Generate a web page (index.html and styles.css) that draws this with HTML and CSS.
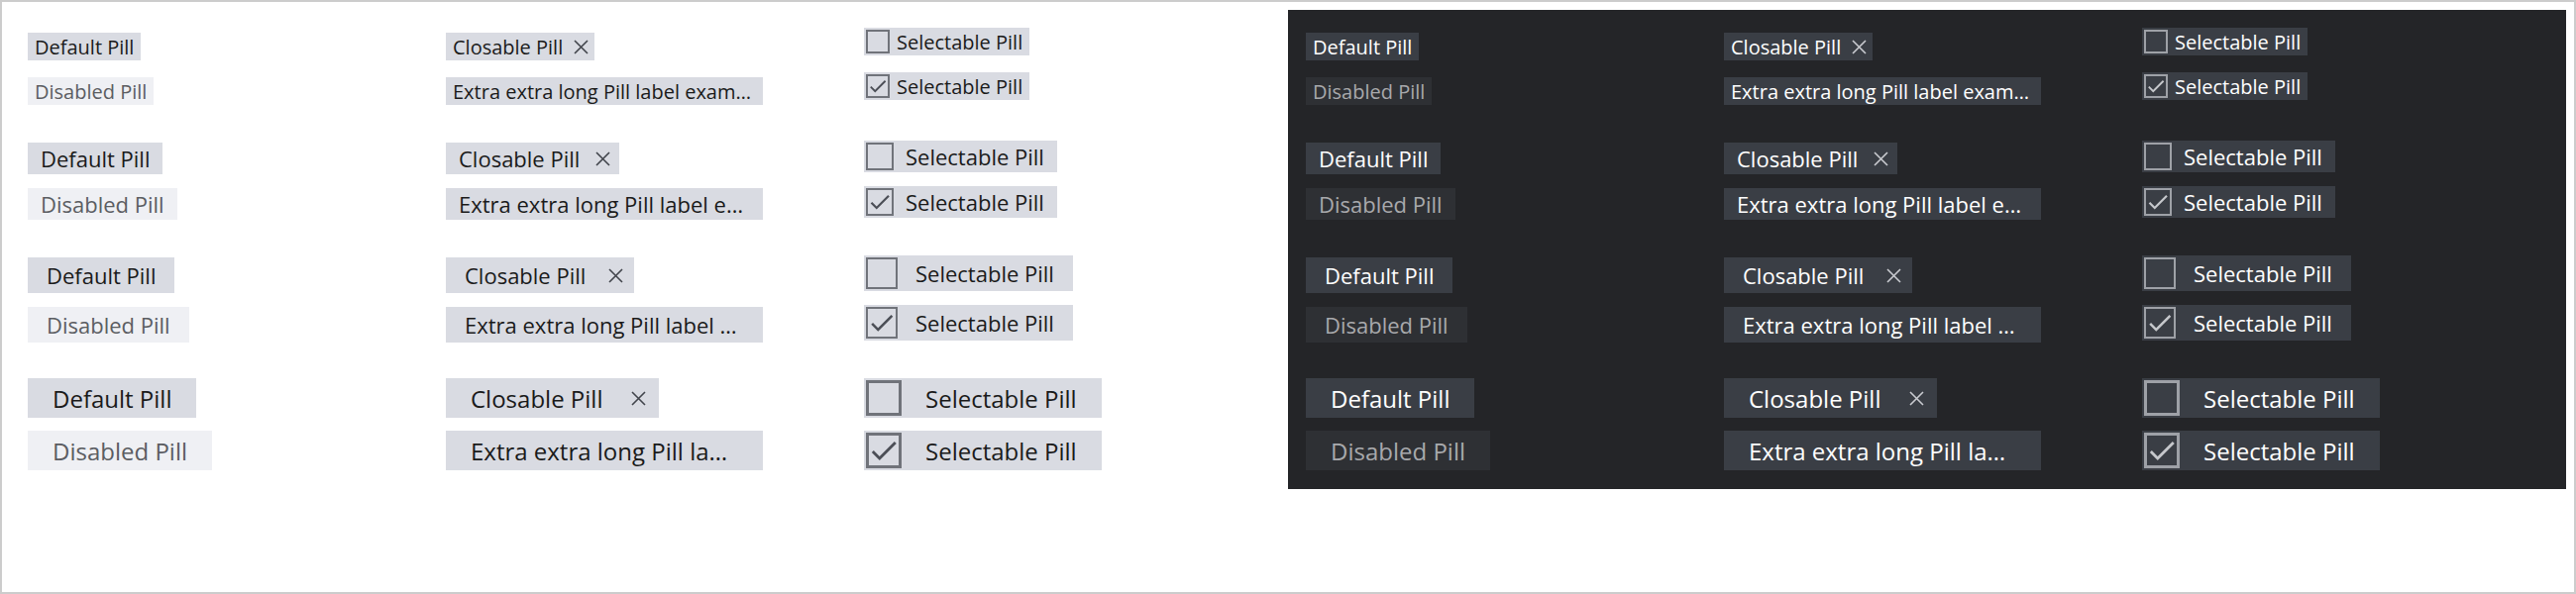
FILE: index.html
```html
<!DOCTYPE html>
<html lang="en">
<head>
<meta charset="utf-8">
<title>Pills</title>
<link rel="stylesheet" href="styles.css">
</head>
<body>
<div class="page">
  <section class="panel light">
    <div class="sec s1">
      <div class="cell shift">
        <span class="pill"><span class="lbl">Default Pill</span></span>
        <span class="pill disabled"><span class="lbl">Disabled Pill</span></span>
      </div>
      <div class="cell shift">
        <span class="pill close"><span class="lbl">Closable Pill</span><svg class="x" viewBox="0 0 15 15"><path d="M1 1L14 14M14 1L1 14"/></svg></span>
        <span class="pill long"><span class="lbl">Extra extra long Pill label example</span></span>
      </div>
      <div class="cell">
        <span class="pill sel"><span class="cb"></span><span class="lbl">Selectable Pill</span></span>
        <span class="pill sel"><span class="cb"><svg class="chk" viewBox="0 0 24 24"><path d="M9 16.17L4.83 12l-1.42 1.41L9 19 21 7l-1.41-1.41z"/></svg></span><span class="lbl">Selectable Pill</span></span>
      </div>
    </div>
    <div class="sec s2">
      <div class="cell shift">
        <span class="pill"><span class="lbl">Default Pill</span></span>
        <span class="pill disabled"><span class="lbl">Disabled Pill</span></span>
      </div>
      <div class="cell shift">
        <span class="pill close"><span class="lbl">Closable Pill</span><svg class="x" viewBox="0 0 15 15"><path d="M1 1L14 14M14 1L1 14"/></svg></span>
        <span class="pill long"><span class="lbl">Extra extra long Pill label example</span></span>
      </div>
      <div class="cell">
        <span class="pill sel"><span class="cb"></span><span class="lbl">Selectable Pill</span></span>
        <span class="pill sel"><span class="cb"><svg class="chk" viewBox="0 0 24 24"><path d="M9 16.17L4.83 12l-1.42 1.41L9 19 21 7l-1.41-1.41z"/></svg></span><span class="lbl">Selectable Pill</span></span>
      </div>
    </div>
    <div class="sec s3">
      <div class="cell shift">
        <span class="pill"><span class="lbl">Default Pill</span></span>
        <span class="pill disabled"><span class="lbl">Disabled Pill</span></span>
      </div>
      <div class="cell shift">
        <span class="pill close"><span class="lbl">Closable Pill</span><svg class="x" viewBox="0 0 15 15"><path d="M1 1L14 14M14 1L1 14"/></svg></span>
        <span class="pill long"><span class="lbl">Extra extra long Pill label example</span></span>
      </div>
      <div class="cell">
        <span class="pill sel"><span class="cb"></span><span class="lbl">Selectable Pill</span></span>
        <span class="pill sel"><span class="cb"><svg class="chk" viewBox="0 0 24 24"><path d="M9 16.17L4.83 12l-1.42 1.41L9 19 21 7l-1.41-1.41z"/></svg></span><span class="lbl">Selectable Pill</span></span>
      </div>
    </div>
    <div class="sec s4">
      <div class="cell shift">
        <span class="pill"><span class="lbl">Default Pill</span></span>
        <span class="pill disabled"><span class="lbl">Disabled Pill</span></span>
      </div>
      <div class="cell shift">
        <span class="pill close"><span class="lbl">Closable Pill</span><svg class="x" viewBox="0 0 15 15"><path d="M1 1L14 14M14 1L1 14"/></svg></span>
        <span class="pill long"><span class="lbl">Extra extra long Pill label example</span></span>
      </div>
      <div class="cell">
        <span class="pill sel"><span class="cb"></span><span class="lbl">Selectable Pill</span></span>
        <span class="pill sel"><span class="cb"><svg class="chk" viewBox="0 0 24 24"><path d="M9 16.17L4.83 12l-1.42 1.41L9 19 21 7l-1.41-1.41z"/></svg></span><span class="lbl">Selectable Pill</span></span>
      </div>
    </div>
  </section>
  <section class="panel dark">
    <div class="sec s1">
      <div class="cell shift">
        <span class="pill"><span class="lbl">Default Pill</span></span>
        <span class="pill disabled"><span class="lbl">Disabled Pill</span></span>
      </div>
      <div class="cell shift">
        <span class="pill close"><span class="lbl">Closable Pill</span><svg class="x" viewBox="0 0 15 15"><path d="M1 1L14 14M14 1L1 14"/></svg></span>
        <span class="pill long"><span class="lbl">Extra extra long Pill label example</span></span>
      </div>
      <div class="cell">
        <span class="pill sel"><span class="cb"></span><span class="lbl">Selectable Pill</span></span>
        <span class="pill sel"><span class="cb"><svg class="chk" viewBox="0 0 24 24"><path d="M9 16.17L4.83 12l-1.42 1.41L9 19 21 7l-1.41-1.41z"/></svg></span><span class="lbl">Selectable Pill</span></span>
      </div>
    </div>
    <div class="sec s2">
      <div class="cell shift">
        <span class="pill"><span class="lbl">Default Pill</span></span>
        <span class="pill disabled"><span class="lbl">Disabled Pill</span></span>
      </div>
      <div class="cell shift">
        <span class="pill close"><span class="lbl">Closable Pill</span><svg class="x" viewBox="0 0 15 15"><path d="M1 1L14 14M14 1L1 14"/></svg></span>
        <span class="pill long"><span class="lbl">Extra extra long Pill label example</span></span>
      </div>
      <div class="cell">
        <span class="pill sel"><span class="cb"></span><span class="lbl">Selectable Pill</span></span>
        <span class="pill sel"><span class="cb"><svg class="chk" viewBox="0 0 24 24"><path d="M9 16.17L4.83 12l-1.42 1.41L9 19 21 7l-1.41-1.41z"/></svg></span><span class="lbl">Selectable Pill</span></span>
      </div>
    </div>
    <div class="sec s3">
      <div class="cell shift">
        <span class="pill"><span class="lbl">Default Pill</span></span>
        <span class="pill disabled"><span class="lbl">Disabled Pill</span></span>
      </div>
      <div class="cell shift">
        <span class="pill close"><span class="lbl">Closable Pill</span><svg class="x" viewBox="0 0 15 15"><path d="M1 1L14 14M14 1L1 14"/></svg></span>
        <span class="pill long"><span class="lbl">Extra extra long Pill label example</span></span>
      </div>
      <div class="cell">
        <span class="pill sel"><span class="cb"></span><span class="lbl">Selectable Pill</span></span>
        <span class="pill sel"><span class="cb"><svg class="chk" viewBox="0 0 24 24"><path d="M9 16.17L4.83 12l-1.42 1.41L9 19 21 7l-1.41-1.41z"/></svg></span><span class="lbl">Selectable Pill</span></span>
      </div>
    </div>
    <div class="sec s4">
      <div class="cell shift">
        <span class="pill"><span class="lbl">Default Pill</span></span>
        <span class="pill disabled"><span class="lbl">Disabled Pill</span></span>
      </div>
      <div class="cell shift">
        <span class="pill close"><span class="lbl">Closable Pill</span><svg class="x" viewBox="0 0 15 15"><path d="M1 1L14 14M14 1L1 14"/></svg></span>
        <span class="pill long"><span class="lbl">Extra extra long Pill label example</span></span>
      </div>
      <div class="cell">
        <span class="pill sel"><span class="cb"></span><span class="lbl">Selectable Pill</span></span>
        <span class="pill sel"><span class="cb"><svg class="chk" viewBox="0 0 24 24"><path d="M9 16.17L4.83 12l-1.42 1.41L9 19 21 7l-1.41-1.41z"/></svg></span><span class="lbl">Selectable Pill</span></span>
      </div>
    </div>
  </section>
</div>
</body>
</html>
```

FILE: styles.css
```css
html, body {
  margin: 0;
  padding: 0;
  background: #ffffff;
}

.page {
  width: 2600px;
  height: 600px;
  box-sizing: border-box;
  border: 2px solid #cccccc;
  padding: 8px;
  display: flex;
  align-items: flex-start;
  background: #ffffff;
  font-family: "Open Sans", "Noto Sans", sans-serif;
}

.panel {
  width: 1290px;
  flex: none;
  box-sizing: border-box;
  padding: 18px 18px 19px;
  display: flex;
  flex-direction: column;
  gap: 36px;
}

.light {
  background: #ffffff;
  --bg: #d9dbe2;
  --fg: #1a1a1a;
  --dbg: #eff0f4;
  --dfg: #5b5d62;
  --ic: #41444b;
  --cbc: #70737a;
  --ck: #4b4e56;
}

.dark {
  background: #242528;
  --bg: #3a3e45;
  --fg: #ffffff;
  --dbg: #2e3034;
  --dfg: #a8a9ac;
  --ic: #c9cbd0;
  --cbc: #9ea1a7;
  --ck: #c6c8cc;
}

.sec {
  display: grid;
  grid-template-columns: 422px 422px 422px;
  align-items: start;
}

.s1 { --h: 28px; --fs: 20px; --p: 7px;  --g: 17px; --sh: 5px; --xm: 11px; --xp: 6px;  --cb: 24px; --cbw: 2px;   --cg: 7px; }
.s2 { --h: 32px; --fs: 22px; --p: 13px; --g: 14px; --sh: 2px; --xm: 16px; --xp: 9px;  --cb: 28px; --cbw: 2px;   --cg: 12px; }
.s3 { --h: 36px; --fs: 22px; --p: 19px; --g: 14px; --sh: 2px; --xm: 23px; --xp: 11px; --cb: 32px; --cbw: 2.5px; --cg: 18px; }
.s4 { --h: 40px; --fs: 24px; --p: 25px; --g: 13px; --sh: 0px; --xm: 29px; --xp: 13px; --cb: 36px; --cbw: 3px;   --cg: 24px; }

.cell {
  display: flex;
  flex-direction: column;
  align-items: flex-start;
  gap: var(--g);
}

.cell.shift {
  padding-top: var(--sh);
}

.pill {
  display: inline-flex;
  align-items: center;
  box-sizing: border-box;
  height: var(--h);
  max-width: 320px;
  padding: 0 var(--p);
  font-size: var(--fs);
  background: var(--bg);
  color: var(--fg);
  white-space: nowrap;
}

.pill.disabled {
  background: var(--dbg);
  color: var(--dfg);
}

.pill.long {
  width: 320px;
}

.lbl {
  min-width: 0;
  overflow: hidden;
  text-overflow: ellipsis;
  white-space: nowrap;
}

.pill.close {
  padding-right: var(--xp);
}

.x {
  flex: none;
  width: 15px;
  height: 15px;
  margin-left: var(--xm);
  fill: none;
  stroke: var(--ic);
  stroke-width: 1.6;
}

.pill.sel {
  padding-left: 2px;
}

.cb {
  position: relative;
  flex: none;
  box-sizing: border-box;
  width: var(--cb);
  height: var(--cb);
  border: var(--cbw) solid var(--cbc);
  margin-right: var(--cg);
}

.chk {
  position: absolute;
  left: calc(1px - var(--cbw));
  top: calc(1px - var(--cbw));
  width: calc(var(--cb) - 2px);
  height: calc(var(--cb) - 2px);
  fill: var(--ck);
}
```
